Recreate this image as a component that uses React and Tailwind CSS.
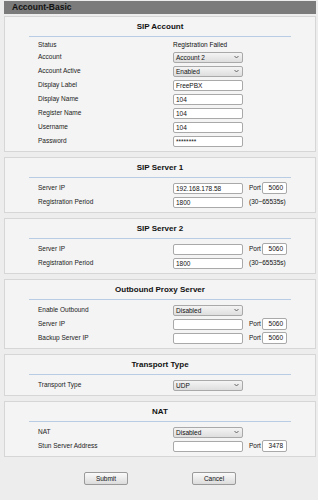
import React from 'react';

const sections = [
  {
    title: 'SIP Account',
    rows: [
      { label: 'Status', type: 'text', value: 'Registration Failed', short: true },
      { label: 'Account', type: 'select', value: 'Account 2' },
      { label: 'Account Active', type: 'select', value: 'Enabled' },
      { label: 'Display Label', type: 'input', value: 'FreePBX' },
      { label: 'Display Name', type: 'input', value: '104' },
      { label: 'Register Name', type: 'input', value: '104' },
      { label: 'Username', type: 'input', value: '104' },
      { label: 'Password', type: 'input', value: '********' },
    ],
  },
  {
    title: 'SIP Server 1',
    rows: [
      { label: 'Server IP', type: 'input', value: '192.168.178.58', port: '5060' },
      { label: 'Registration Period', type: 'input', value: '1800', note: '(30~65535s)' },
    ],
  },
  {
    title: 'SIP Server 2',
    rows: [
      { label: 'Server IP', type: 'input', value: '', port: '5060' },
      { label: 'Registration Period', type: 'input', value: '1800', note: '(30~65535s)' },
    ],
  },
  {
    title: 'Outbound Proxy Server',
    rows: [
      { label: 'Enable Outbound', type: 'select', value: 'Disabled' },
      { label: 'Server IP', type: 'input', value: '', port: '5060' },
      { label: 'Backup Server IP', type: 'input', value: '', port: '5060' },
    ],
  },
  {
    title: 'Transport Type',
    rows: [{ label: 'Transport Type', type: 'select', value: 'UDP' }],
  },
  {
    title: 'NAT',
    rows: [
      { label: 'NAT', type: 'select', value: 'Disabled' },
      { label: 'Stun Server Address', type: 'input', value: '', port: '3478' },
    ],
  },
];

// tiny dropdown caret used inside the select boxes
const Caret = () => (
  <svg width="5" height="4" viewBox="0 0 5 4" className="text-[#555]">
    <path d="M0.5 1 L2.5 3 L4.5 1" fill="none" stroke="currentColor" strokeWidth="0.9" />
  </svg>
);

function Field({ row }) {
  if (row.type === 'text') {
    return <div className="w-[70px] leading-[10px]">{row.value}</div>;
  }
  if (row.type === 'select') {
    return (
      <div className="flex h-[11px] w-[70px] items-center justify-between rounded-[2px] border border-[#a9a9a9] bg-gradient-to-b from-[#f4f4f4] to-[#dedede] pl-[2px] pr-[3px]">
        <span className="leading-[9px]">{row.value}</span>
        <Caret />
      </div>
    );
  }
  return (
    <div className="flex h-[11px] w-[70px] items-center rounded-[2px] border border-[#a9a9a9] bg-white pl-[2px]">
      <span className="leading-[9px]">{row.value}</span>
    </div>
  );
}

function Section({ title, rows }) {
  return (
    <div className="border border-[#d6d6d6] bg-[#f4f4f4] pb-[3px] pt-[4px]">
      <div className="h-[12px] text-center text-[8px] font-bold leading-[12px] text-[#111]">{title}</div>
      <div className="mx-[24px] mt-[3px] h-px bg-[#b8cce3]" />
      <div className="pt-[3px]">
        {rows.map((row, i) => (
          <div
            key={i}
            className={`flex items-center pl-[33px] ${row.short ? 'h-[10px]' : 'h-[14px]'}`}
          >
            <div className="w-[135px] text-[#222]">{row.label}</div>
            <Field row={row} />
            {row.port && (
              <div className="ml-[6px] flex items-center">
                <span className="w-[13px]">Port</span>
                <div className="flex h-[12px] w-[25px] items-center justify-end rounded-[2px] border border-[#a9a9a9] bg-white pr-[3px]">
                  {row.port}
                </div>
              </div>
            )}
            {row.note && <span className="ml-[6px]">{row.note}</span>}
          </div>
        ))}
      </div>
    </div>
  );
}

export default function App() {
  return (
    <div
      className="h-[500px] w-[318px] overflow-hidden bg-[#ededed] text-[6.5px] text-[#111]"
      style={{ fontFamily: '"Liberation Sans", Arial, sans-serif' }}
    >
      <div className="ml-[4px] w-[312px]">
        <div className="mt-px flex h-[13px] items-center bg-[#7b7b7b] pl-[8px] text-[8.5px] font-bold text-[#111]">
          Account-Basic
        </div>
        <div className="mt-[2px] flex flex-col gap-[5px]">
          {sections.map((s) => (
            <Section key={s.title} title={s.title} rows={s.rows} />
          ))}
        </div>
        <div className="mt-[15px] flex">
          <button className="ml-[80px] h-[13px] w-[44px] rounded-[2px] border border-[#9a9a9a] bg-gradient-to-b from-[#fafafa] to-[#dcdcdc] text-[6.5px] text-[#111]">
            Submit
          </button>
          <button className="ml-[64px] h-[13px] w-[44px] rounded-[2px] border border-[#9a9a9a] bg-gradient-to-b from-[#fafafa] to-[#dcdcdc] text-[6.5px] text-[#111]">
            Cancel
          </button>
        </div>
      </div>
    </div>
  );
}
